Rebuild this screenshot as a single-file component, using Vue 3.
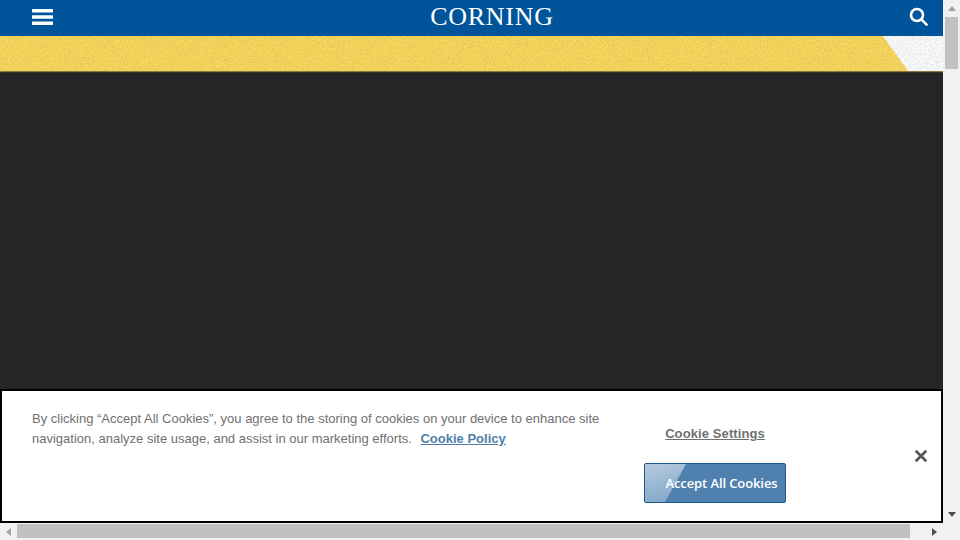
<template>
  <div class="screen">
    <div class="page">
      <header class="topbar">
        <svg class="menu-icon" width="21" height="16" viewBox="0 0 21 16" aria-label="Menu">
          <rect x="0" y="0" width="21" height="3.4" rx="0.5" />
          <rect x="0" y="6.3" width="21" height="3.4" rx="0.5" />
          <rect x="0" y="12.6" width="21" height="3.4" rx="0.5" />
        </svg>
        <span class="logo">CORNING</span>
        <svg class="search-icon" width="20" height="20" viewBox="0 0 20 20" aria-label="Search">
          <circle cx="8" cy="8" r="6" />
          <line x1="12.4" y1="12.4" x2="17.6" y2="17.6" />
        </svg>
      </header>

      <svg class="band" width="943" height="37" viewBox="0 0 943 37">
        <defs>
          <filter id="grain" x="0" y="0" width="100%" height="100%">
            <feTurbulence type="fractalNoise" baseFrequency="0.7" numOctaves="2" seed="4" />
            <feColorMatrix type="matrix" values="0 0 0 0 0.6  0 0 0 0 0.45  0 0 0 0 0.1  1 1 0 0 -0.82" />
          </filter>
          <filter id="grain-white" x="0" y="0" width="100%" height="100%">
            <feTurbulence type="fractalNoise" baseFrequency="0.6" numOctaves="2" seed="9" />
            <feColorMatrix type="matrix" values="0 0 0 0 0.6  0 0 0 0 0.62  0 0 0 0 0.66  0.9 0.9 0 0 -0.74" />
          </filter>
          <clipPath id="yellow-part">
            <polygon points="0,0 883,0 908,35 0,35" />
          </clipPath>
          <clipPath id="white-part">
            <polygon points="883,0 943,0 943,35 908,35" />
          </clipPath>
        </defs>
        <rect width="943" height="35" fill="#fbd85c" />
        <polygon points="883,0 943,0 943,35 908,35" fill="#fbfbfb" />
        <g clip-path="url(#yellow-part)"><rect width="943" height="35" filter="url(#grain)" /></g>
        <g clip-path="url(#white-part)"><rect width="943" height="35" filter="url(#grain-white)" /></g>
        <rect y="35" width="943" height="1" fill="#8a7a40" />
        <rect y="36" width="943" height="1" fill="#3a3524" />
      </svg>

      <main class="dark"></main>

      <section class="cookie-banner">
        <p class="cookie-text">
          By clicking “Accept All Cookies”, you agree to the storing of cookies on your device to enhance site navigation, analyze site usage, and assist in our marketing efforts.
          <a class="policy" href="#">Cookie Policy</a>
        </p>
        <div class="cookie-actions">
          <a class="settings" href="#">Cookie Settings</a>
          <button class="accept" type="button"><span>Accept All Cookies</span></button>
        </div>
        <svg class="close" width="13" height="13" viewBox="0 0 13 13" aria-label="Close">
          <path d="M1.7 1.7 L12.3 12.3 M12.3 1.7 L1.7 12.3" />
        </svg>
      </section>
    </div>

    <div class="vscroll">
      <span class="arrow up"></span>
      <div class="vtrack"><div class="vthumb"></div></div>
      <span class="arrow down"></span>
    </div>

    <div class="hscroll">
      <span class="arrow left"></span>
      <div class="htrack"><div class="hthumb"></div></div>
      <span class="arrow right"></span>
    </div>
    <div class="corner"></div>
  </div>
</template>

<script setup>
</script>

<style>
html, body {
  margin: 0;
  overflow: hidden;
}
</style>

<style scoped>
.screen {
  display: grid;
  grid-template-columns: 943px 17px;
  grid-template-rows: 523px 17px;
  width: 960px;
  height: 540px;
  overflow: hidden;
  background: #f1f1f1;
}

.page {
  position: relative;
  display: flex;
  flex-direction: column;
  overflow: hidden;
}

.topbar {
  display: flex;
  align-items: center;
  justify-content: space-between;
  flex: none;
  height: 36px;
  padding: 0 14px 0 32px;
  background: #00549a;
}

.menu-icon {
  margin-top: -3px;
  fill: #fff;
}

.logo {
  margin: -3px 0 0 22px;
  font-family: "Liberation Serif", serif;
  font-size: 26px;
  line-height: 32px;
  letter-spacing: 0.7px;
  color: #fff;
}

.search-icon {
  margin-top: -2px;
  fill: none;
  stroke: #fff;
  stroke-width: 2.6;
  stroke-linecap: round;
}

.band {
  display: block;
  flex: none;
}

.dark {
  flex: 1;
  background: #252525;
}

.cookie-banner {
  position: absolute;
  left: 0;
  right: 0;
  bottom: 0;
  display: flex;
  box-sizing: border-box;
  height: 134px;
  padding: 18px 0 0 30px;
  background: #fff;
  border: 2px solid #000;
}

.cookie-text {
  width: 580px;
  margin: 0;
  font-family: "Liberation Sans", Arial, sans-serif;
  font-size: 13px;
  line-height: 20px;
  color: #707070;
}

.policy {
  margin-left: 5px;
  font-weight: 700;
  color: #4f7fa9;
  text-decoration: underline;
}

.cookie-actions {
  display: flex;
  flex-direction: column;
  align-items: center;
  width: 142px;
  margin-left: 32px;
}

.settings {
  margin-top: 16px;
  font-family: "Liberation Sans", Arial, sans-serif;
  font-size: 13px;
  font-weight: 700;
  line-height: 17px;
  letter-spacing: 0.1px;
  color: #707070;
  text-decoration: underline;
}

.accept {
  position: relative;
  overflow: hidden;
  box-sizing: border-box;
  width: 142px;
  height: 40px;
  margin-top: 21px;
  padding: 0 0 0 13px;
  font-family: "Open Sans", sans-serif;
  font-size: 13px;
  font-weight: 600;
  letter-spacing: -0.1px;
  color: #fff;
  background: #4f80ae;
  border: 1px solid #1f5a8c;
  border-radius: 2px;
}

.accept span {
  position: relative;
}

.accept::before {
  content: "";
  position: absolute;
  inset: 0;
  background: linear-gradient(165deg, #b4cadd 0, #8fb0ce 45%, #5c8ab6 100%);
  clip-path: polygon(0 0, 41px 0, 20px 100%, 0 100%);
}

.close {
  position: absolute;
  top: 58px;
  right: 14px;
  fill: none;
  stroke: #565656;
  stroke-width: 2.7;
}

.vscroll {
  display: flex;
  flex-direction: column;
  align-items: center;
  background: #f1f1f1;
}

.vtrack {
  flex: 1;
  width: 100%;
}

.vthumb {
  width: 13px;
  height: 52px;
  margin-left: 2px;
  background: #c1c1c1;
}

.hscroll {
  display: flex;
  align-items: center;
  background: #f1f1f1;
}

.htrack {
  flex: 1;
  height: 100%;
}

.hthumb {
  width: 893px;
  height: 14px;
  margin-top: 1px;
  background: #c1c1c1;
}

.corner {
  background: #f1f1f1;
}

.arrow {
  flex: none;
  display: block;
  width: 0;
  height: 0;
  border-style: solid;
  border-color: transparent;
}

.arrow.up {
  margin: 6px 0 6px;
  border-width: 0 4px 5px;
  border-bottom-color: #a3a3a3;
}

.arrow.down {
  margin: 6px 0 6px;
  border-width: 5px 4px 0;
  border-top-color: #505050;
}

.arrow.left {
  margin: 0 6px;
  border-width: 4px 5px 4px 0;
  border-right-color: #a3a3a3;
}

.arrow.right {
  margin: 0 6px;
  border-width: 4px 0 4px 5px;
  border-left-color: #505050;
}
</style>
